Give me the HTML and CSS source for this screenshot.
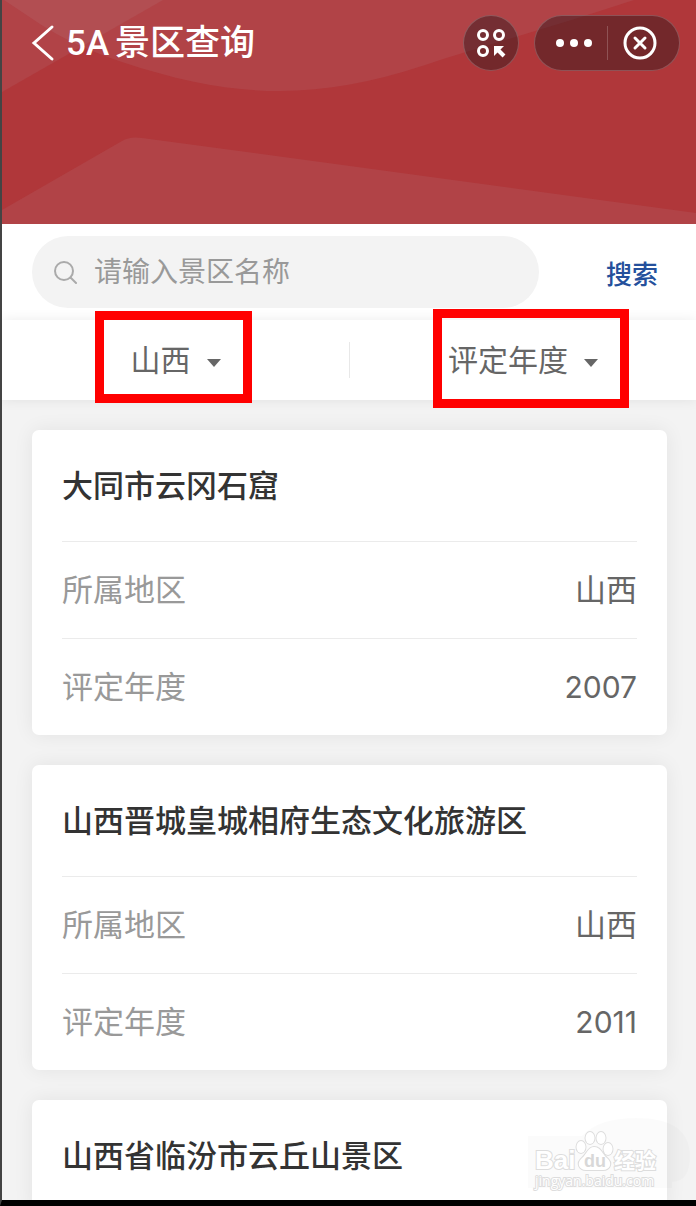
FILE: index.html
```
<!DOCTYPE html>
<html lang="zh-CN">
<head>
    <meta charset="UTF-8">
    <meta name="viewport" content="width=device-width, initial-scale=1.0">
    <title>5A景区查询</title>
    <link rel="stylesheet" href="styles.css">
</head>
<body>
    <div class="app">
        <header class="header">
            <svg class="header-bg" viewBox="0 0 694 224" preserveAspectRatio="none" aria-hidden="true">
                <path d="M0 0H161L0 92Z"/>
                <path d="M2 0L38 24Q72 46 120 62C240 102 320 98 420 66C490 43 560 24 632 0Z"/>
                <path d="M0 210L120 141Q128 136 140 138L348 166L694 213V224H0Z"/>
            </svg>
            <button class="back" aria-label="返回">
                <svg width="24" height="38" viewBox="0 0 24 38"><path d="M21 3L3 19L21 35"/></svg>
            </button>
            <h1 class="title"><span>5A</span>景区查询</h1>
            <button class="round" aria-label="小程序">
                <svg width="30" height="30" viewBox="0 0 30 30">
                    <circle cx="7" cy="7" r="4.500"/>
                    <circle cx="23" cy="7" r="4.500"/>
                    <circle cx="7" cy="23" r="4.500"/>
                    <path d="M18 18H28L18 28Z" class="solid"/>
                    <path d="M20 20L28 28" class="shaft"/>
                </svg>
            </button>
            <div class="capsule">
                <button aria-label="更多">
                    <svg width="36" height="10" viewBox="0 0 36 10" class="dots">
                        <circle cx="4" cy="5" r="4"/>
                        <circle cx="18" cy="5" r="4"/>
                        <circle cx="32" cy="5" r="4"/>
                    </svg>
                </button>
                <button aria-label="关闭">
                    <svg width="34" height="34" viewBox="0 0 34 34">
                        <circle cx="17" cy="17" r="15"/>
                        <path d="M12 12L22 22M22 12L12 22"/>
                    </svg>
                </button>
            </div>
        </header>

        <form class="search" onsubmit="return false">
            <label class="search-box">
                <svg width="24" height="24" viewBox="0 0 24 24"><circle cx="10" cy="11" r="9"/><path d="M16.500 17.500L22 23"/></svg>
                <input type="text" placeholder="请输入景区名称" aria-label="景区名称">
            </label>
            <button class="search-btn">搜索</button>
        </form>

        <div class="filters">
            <div class="filter">
                <label class="picker">
                    <select aria-label="所属地区">
                        <option>山西</option>
                        <option>北京</option>
                        <option>河北</option>
                    </select>
                    <svg width="14" height="8" viewBox="0 0 14 8"><path d="M0 0H14L7 8Z"/></svg>
                    <span class="mark mark-area"></span>
                </label>
            </div>
            <div class="filter">
                <label class="picker">
                    <select aria-label="评定年度">
                        <option>评定年度</option>
                        <option>2007</option>
                        <option>2011</option>
                    </select>
                    <svg width="14" height="8" viewBox="0 0 14 8"><path d="M0 0H14L7 8Z"/></svg>
                    <span class="mark mark-year"></span>
                </label>
            </div>
        </div>

        <main class="list">
            <article class="card">
                <h2>大同市云冈石窟</h2>
                <dl>
                    <div class="row"><dt>所属地区</dt><dd>山西</dd></div>
                    <div class="row"><dt>评定年度</dt><dd class="num">2007</dd></div>
                </dl>
            </article>
            <article class="card">
                <h2>山西晋城皇城相府生态文化旅游区</h2>
                <dl>
                    <div class="row"><dt>所属地区</dt><dd>山西</dd></div>
                    <div class="row"><dt>评定年度</dt><dd class="num">2011</dd></div>
                </dl>
            </article>
            <article class="card">
                <h2>山西省临汾市云丘山景区</h2>
            </article>
        </main>

        <svg class="watermark" width="170" height="88" viewBox="0 0 170 88">
            <path class="haze" d="M0 20H54Q70 2 108 2Q162 2 162 40Q162 66 144 66V72H0Z"/>
            <g class="paw">
                <ellipse cx="53" cy="31" rx="4.500" ry="6"/>
                <ellipse cx="62" cy="22" rx="4.500" ry="6"/>
                <ellipse cx="73" cy="22" rx="4.500" ry="6"/>
                <ellipse cx="80" cy="33" rx="4.500" ry="6"/>
                <path d="M66 31C60 31 59 38 54 42C48 47 51 54 58 54C63 54 70 54 75 54C82 54 85 47 79 42C74 38 73 31 66 31Z"/>
            </g>
            <text class="wm-brand" x="7" y="53">Bai</text>
            <text class="wm-du" x="56" y="51">du</text>
            <text class="wm-cn" x="86" y="52">经验</text>
            <text class="wm-url" x="7" y="70">jingyan.baidu.com</text>
        </svg>
    </div>
</body>
</html>
```
FILE: styles.css
```
* {
    box-sizing: border-box;
}

body {
    margin: 0;
    font-family: Inter, "Noto Sans CJK SC", sans-serif;
    color: #333;
}

button,
input,
select {
    padding: 0;
    border: none;
    background: none;
    font: inherit;
    color: inherit;
}

button {
    cursor: pointer;
}

svg {
    display: block;
    fill: none;
    stroke-linecap: round;
}

.app {
    position: relative;
    display: flex;
    flex-direction: column;
    height: 100vh;
    overflow: hidden;
    border-left: 2px solid #444;
    border-bottom: 6px solid #000;
    background-color: #f3f3f3;
}

/* header */
.header {
    position: relative;
    display: flex;
    align-items: flex-start;
    flex-shrink: 0;
    height: 224px;
    padding: 15px 16px 0 29px;
    background-color: #b0373a;
    color: #fff;
}

.header svg {
    stroke: #fff;
    stroke-width: 3;
}

.header .header-bg {
    position: absolute;
    inset: 0;
    width: 100%;
    height: 100%;
    fill: rgba(190, 180, 185, 0.1);
    stroke: none;
}

.back,
.round,
.capsule {
    position: relative;
    display: flex;
    align-items: center;
    height: 56px;
}

.title {
    position: relative;
    flex: 1;
    margin: 0 0 0 11px;
    font-size: 35px;
    font-weight: 500;
    line-height: 54px;
    white-space: nowrap;
}

.title span {
    margin-right: 6px;
    font-family: Roboto, sans-serif;
}

.round,
.capsule {
    border: 1px solid rgba(255, 255, 255, 0.2);
    border-radius: 28px;
    background-color: rgba(30, 20, 24, 0.42);
}

.round {
    justify-content: center;
    width: 56px;
    margin-right: 15px;
}

.header .solid {
    fill: #fff;
    stroke: none;
}

.header .shaft {
    stroke-width: 4;
    stroke-linecap: butt;
}

.capsule {
    width: 146px;
}

.capsule button {
    display: flex;
    flex: 1;
    align-items: center;
    justify-content: center;
    height: 34px;
}

.capsule button:first-child {
    padding-left: 6px;
}

.capsule button + button {
    padding-right: 6px;
    border-left: 1px solid rgba(255, 255, 255, 0.2);
}

.header .dots {
    fill: #fff;
    stroke: none;
}

/* search */
.search {
    display: flex;
    flex-shrink: 0;
    align-items: center;
    gap: 67px;
    height: 96px;
    padding: 0 38px 0 30px;
    background-color: #fff;
}

.search-box {
    display: flex;
    flex: 1;
    align-items: center;
    gap: 16px;
    min-width: 0;
    height: 72px;
    padding: 0 22px;
    border-radius: 36px;
    background-color: #f3f3f3;
}

.search-box svg {
    flex-shrink: 0;
    stroke: #aaa;
    stroke-width: 2;
}

.search-box input {
    flex: 1;
    min-width: 0;
    font-size: 28px;
    outline: none;
}

.search-box input::placeholder {
    color: #999;
}

.search-btn {
    flex-shrink: 0;
    font-size: 26px;
    font-weight: 500;
    color: #24509c;
    white-space: nowrap;
}

/* filters */
.filters {
    position: relative;
    display: flex;
    flex-shrink: 0;
    height: 80px;
    background-color: #fff;
    box-shadow: 0 0 12px rgba(0, 0, 0, 0.08);
}

.filter {
    display: flex;
    flex: 1;
    align-items: center;
    justify-content: center;
}

.filter + .filter::before {
    content: "";
    width: 1px;
    height: 36px;
    margin-right: auto;
    background-color: #e8e8e8;
}

.filter + .filter .picker {
    margin-right: auto;
}

.picker {
    position: relative;
    display: flex;
    align-items: center;
    gap: 16px;
    font-size: 30px;
    color: #666;
}

.picker select {
    appearance: none;
    outline: none;
    cursor: pointer;
}

.picker svg {
    margin-top: 6px;
    fill: #666;
}

.mark {
    position: absolute;
    border: 9px solid #f00;
    pointer-events: none;
}

.mark-area {
    inset: -31px -31px -25px -36px;
}

.mark-year {
    inset: -33px -31px -30px -15px;
}

/* list */
.list {
    display: flex;
    flex-direction: column;
    gap: 30px;
    padding: 30px 29px 0 30px;
}

.card {
    padding: 0 30px;
    border-radius: 7px;
    background-color: #fff;
    box-shadow: 0 0 20px rgba(0, 0, 0, 0.07);
    font-size: 31px;
}

.card h2 {
    margin: 0;
    font-size: 31px;
    font-weight: 500;
    line-height: 111px;
    white-space: nowrap;
}

.card dl {
    margin: 0;
}

.row {
    display: flex;
    justify-content: space-between;
    border-top: 1px solid #ebebeb;
    line-height: 96px;
}

.row dt {
    color: #999;
}

.row dd {
    margin: 0;
    color: #666;
}

.row .num {
    font-size: 30px;
}

/* watermark */
.watermark {
    position: absolute;
    right: -2px;
    bottom: -4px;
    pointer-events: none;
}

.watermark .haze {
    fill: rgba(0, 0, 0, 0.015);
}

.paw,
.watermark text {
    fill: #fff;
    stroke: #ddd;
    stroke-width: 2;
    paint-order: stroke;
}

.wm-brand {
    font: bold 26px "Liberation Sans", sans-serif;
}

.watermark .wm-du {
    font: bold 18px "Liberation Sans", sans-serif;
    fill: #d8d8d8;
    stroke: none;
}

.wm-cn {
    font: bold 21px "Noto Sans CJK SC", sans-serif;
}

.wm-url {
    font: 14px "Open Sans", sans-serif;
}
```
